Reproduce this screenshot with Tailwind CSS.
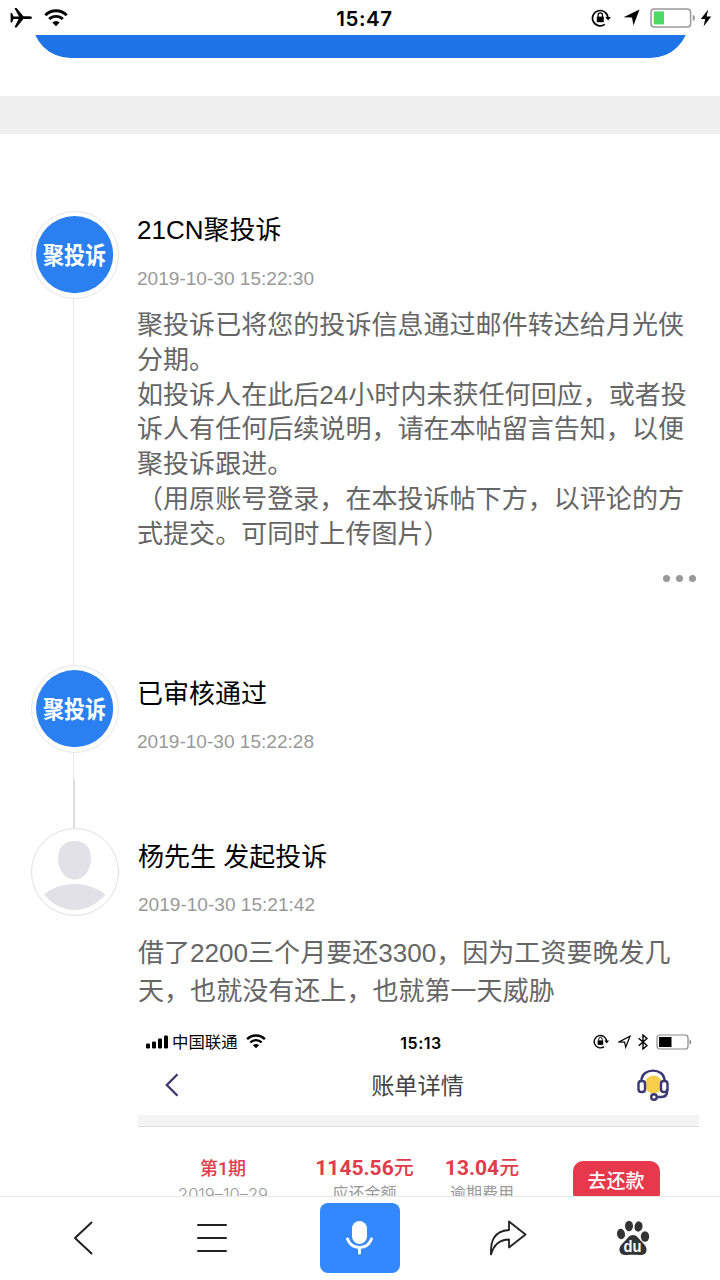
<!DOCTYPE html>
<html lang="zh-CN">

<head>
    <meta charset="UTF-8">
    <meta name="viewport" content="width=device-width, initial-scale=1.0">
    <title>聚投诉</title>
    <script src="https://cdn.jsdelivr.net/npm/@tailwindcss/browser@4"></script>
</head>
<body class="bg-white font-['Liberation_Sans','Noto_Sans_CJK_SC',sans-serif]">
    <div class="w-[720px] h-[1280px] flex flex-col overflow-hidden bg-white">

        <!-- status bar -->
        <header class="relative h-[35px] shrink-0 flex items-center justify-between pl-[10px] pr-[8px]">
            <div class="flex items-center gap-[11px]">
                <svg class="w-[23px] h-[20px]" viewBox="0 0 23 20">
                    <path d="M9 8.4 4.6.6Q4.3 0 5.2 0H6.6L13.4 8.3H20Q22 8.5 22 9.7T20 11H13.4L6.6 19.4H5.2Q4.4 19.3 4.7 18.7L8.6 11.1 3.6 10.9 2 14.6H.6V5H2L3.6 8.6Z" />
                </svg>
                <svg class="w-[24px] h-[18px]" viewBox="0 0 24 18" fill="none" stroke="#000">
                    <path d="M1.3 6.2A15 15 0 0 1 22.7 6.2" stroke-width="3" />
                    <path d="M5.2 10.1A9.6 9.6 0 0 1 18.8 10.1" stroke-width="2.8" />
                    <path d="M12 17.2 8.3 13.5A5.2 5.2 0 0 1 15.7 13.5Z" fill="#000" stroke="none" />
                </svg>
            </div>
            <span class="absolute left-0 w-[729px] text-center top-[5px] leading-7 text-[20.5px] tracking-[0.6px] font-semibold font-['Inter',sans-serif]">15:47</span>
            <div class="flex items-center">
                <svg class="w-[20px] h-[18px] mr-[12px]" viewBox="0 0 20 18" fill="none" stroke="#000" stroke-width="1.7">
                    <path d="M16.9 9A7.7 7.7 0 1 0 13.8 15.4" />
                    <path d="M14.3 7.9H20L17.1 11.6Z" fill="#000" stroke="none" />
                    <rect x="5.8" y="7.6" width="7" height="5.6" fill="#000" stroke="none" />
                    <path d="M7.1 8V6.1A2.2 2.2 0 0 1 11.5 6.1V8" stroke-width="1.2" />
                </svg>
                <svg class="w-[17px] h-[17px] mr-[10px]" viewBox="0 0 17 17"><path d="M16.5.5 10.5 16.5 9 8.6.5 8.3Z" /></svg>
                <svg class="w-[46px] h-[20px] mr-[4px]" viewBox="0 0 46 20">
                    <rect x="1" y="1" width="39.6" height="18" rx="3.2" fill="#fff" stroke="#999" stroke-width="1.5" />
                    <rect x="3.8" y="3.4" width="10.2" height="13" fill="#4cd964" />
                    <path d="M42.8 6.8Q45 7.4 45 10T42.8 13.2Z" fill="#999" />
                </svg>
                <svg class="w-[12px] h-[18px]" viewBox="0 0 12 18"><path d="M8.2.4.8 10H5.2L3.6 17.6 11.2 7.4H6.6Z" /></svg>
            </div>
        </header>

        <main class="flex-1 min-h-0 overflow-hidden">
            <div class="h-[61px] overflow-hidden flex flex-col items-center">
                <div class="w-[657px] h-[77px] -mt-[54.5px] shrink-0 rounded-[38.5px] bg-[#1e73e6]"></div>
            </div>
            <div class="h-[38px] bg-[#f0f0f0]"></div>

            <div class="pt-[77px] pl-[31px]">
                <div class="flex h-[454px]">
                    <div class="w-[88px] flex flex-col shrink-0">
                        <svg class="w-[88px] h-[88px] shrink-0" viewBox="0 0 88 88">
                            <circle cx="44" cy="44" r="43.5" fill="#fff" stroke="#e6e6e6" />
                            <circle cx="43.6" cy="43.6" r="38.6" fill="#2a80f0" />
                            <text x="12" y="52.5" textLength="63" lengthAdjust="spacingAndGlyphs" font-size="24" font-weight="700" fill="#fff" font-family="Noto Sans CJK SC">聚投诉</text>
                        </svg>
                        <div class="w-px flex-1 bg-[#e6e6e6] ml-[42px]"></div>
                    </div>
                    <div class="pl-[18px] w-[580px] whitespace-nowrap">
                        <h3 class="text-[26px] leading-[38px]">21CN聚投诉</h3>
                        <p class="mt-[18px] text-[19.07px] leading-6 text-[#999]">2019-10-30 15:22:30</p>
                        <p class="mt-[17px] text-[26.05px] leading-[34.8px] text-[#666]">聚投诉已将您的投诉信息通过邮件转达给月光侠<br>分期。<br>如投诉人在此后24小时内未获任何回应，或者投<br>诉人有任何后续说明，请在本帖留言告知，以便<br>聚投诉跟进。<br>（用原账号登录，在本投诉帖下方，以评论的方<br>式提交。可同时上传图片）</p>
                        <div class="mt-[23px] pr-[3px] flex justify-end gap-[6px]">
                            <i class="size-[7px] rounded-full bg-[#999]"></i>
                            <i class="size-[7px] rounded-full bg-[#999]"></i>
                            <i class="size-[7px] rounded-full bg-[#999]"></i>
                        </div>
                    </div>
                </div>

                <div class="flex h-[163px]">
                    <div class="w-[88px] flex flex-col shrink-0">
                        <svg class="w-[88px] h-[88px] shrink-0" viewBox="0 0 88 88">
                            <circle cx="44" cy="44" r="43.5" fill="#fff" stroke="#e6e6e6" />
                            <circle cx="43.6" cy="43.6" r="38.6" fill="#2a80f0" />
                            <text x="12" y="52.5" textLength="63" lengthAdjust="spacingAndGlyphs" font-size="24" font-weight="700" fill="#fff" font-family="Noto Sans CJK SC">聚投诉</text>
                        </svg>
                        <div class="w-px h-[27px] bg-[#e6e6e6] ml-[42px]"></div>
                        <div class="w-[2px] flex-1 bg-[#ddd] ml-[42px]"></div>
                    </div>
                    <div class="pl-[18px] whitespace-nowrap">
                        <h3 class="mt-[10px] text-[26px] leading-[38px]">已审核通过</h3>
                        <p class="mt-[17px] text-[19.07px] leading-6 text-[#999]">2019-10-30 15:22:28</p>
                    </div>
                </div>

                <div class="flex">
                    <svg class="w-[88px] h-[88px] shrink-0" viewBox="0 0 88 88">
                        <circle cx="44" cy="44" r="43.5" fill="#fff" stroke="#e0e0e0" />
                        <path d="M43.5 13C54 13 60 20 60 30C60 42 53 51.5 43.5 51.5S27 42 27 30C27 20 33 13 43.5 13Z" fill="#e1e1e7" />
                        <path d="M13 66.5Q25 56 43.5 56T74.500 66.5Q61 82 43.5 82T13 66.5Z" fill="#e1e1e7" />
                    </svg>
                    <div class="pl-[19px] w-[580px] whitespace-nowrap">
                        <h3 class="mt-[10px] text-[26px] leading-[38px]">杨先生 发起投诉</h3>
                        <p class="mt-[17px] text-[19.07px] leading-6 text-[#999]">2019-10-30 15:21:42</p>
                        <p class="mt-[17px] text-[26.05px] leading-[38.4px] text-[#666]">借了2200三个月要还3300，因为工资要晚发几<br>天，也就没有还上，也就第一天威胁</p>

                        <!-- attached bill image -->
                        <div class="w-[561px] mt-[18px]">
                            <div class="relative flex h-[26px] items-center justify-between pl-[8px] pr-[7px]">
                                <div class="flex items-center">
                                    <svg class="w-[23px] h-[14px]" viewBox="0 0 23 14">
                                        <rect x="0" y="8.5" width="4" height="5" rx="1.2" />
                                        <rect x="6" y="6.5" width="4" height="7" rx="1.2" />
                                        <rect x="12" y="3.5" width="4" height="10" rx="1.2" />
                                        <rect x="18" y=".5" width="4" height="13" rx="1.2" />
                                    </svg>
                                    <span class="ml-[3px] text-[16.4px] leading-6">中国联通</span>
                                    <svg class="ml-[8px] w-[20px] h-[15px]" viewBox="0 0 24 18" fill="none" stroke="#000">
                                        <path d="M1.3 6.2A15 15 0 0 1 22.7 6.2" stroke-width="3" />
                                        <path d="M5.2 10.1A9.6 9.6 0 0 1 18.8 10.1" stroke-width="2.8" />
                                        <path d="M12 17.2 8.3 13.5A5.2 5.2 0 0 1 15.7 13.5Z" fill="#000" stroke="none" />
                                    </svg>
                                </div>
                                <span class="absolute left-0 top-[2px] w-[566px] text-center text-[16px] leading-6 tracking-[0.5px] font-semibold font-['Inter',sans-serif]">15:13</span>
                                <div class="flex items-center">
                                    <svg class="w-[16px] h-[15px] mr-[9px]" viewBox="0 0 20 18" fill="none" stroke="#000" stroke-width="1.7">
                                        <path d="M16.9 9A7.7 7.7 0 1 0 13.8 15.4" />
                                        <path d="M14.3 7.9H20L17.1 11.6Z" fill="#000" stroke="none" />
                                        <rect x="5.8" y="7.6" width="7" height="5.6" fill="#000" stroke="none" />
                                        <path d="M7.1 8V6.1A2.2 2.2 0 0 1 11.5 6.1V8" stroke-width="1.2" />
                                    </svg>
                                    <svg class="w-[13px] h-[14px] mr-[7px]" viewBox="0 0 13 14" fill="none" stroke="#000" stroke-width="1.2"><path d="M12 1.2 7.7 12.2 6.6 7.1 1 6.9Z" /></svg>
                                    <svg class="w-[10px] h-[16px] mr-[8px]" viewBox="0 0 10 16" fill="none" stroke="#000" stroke-width="1.4"><path d="M.7 4.3 9 11.5 5 15V1L9 4.5.7 11.7" /></svg>
                                    <svg class="w-[36px] h-[16px]" viewBox="0 0 36 16">
                                        <rect x="1" y="1" width="31" height="14" rx="2.8" fill="#fff" stroke="#888" stroke-width="1.2" />
                                        <rect x="3" y="3" width="12.5" height="10" />
                                        <path d="M33.5 5.5Q35.3 6 35.3 8T33.5 10.5Z" fill="#888" />
                                    </svg>
                                </div>
                            </div>
                            <div class="flex items-center justify-between h-[60px] pl-[27px] pr-[30px]">
                                <svg class="w-[14px] h-[24px]" viewBox="0 0 14 24" fill="none" stroke="#3b3873" stroke-width="2.3"><path d="M12.5 1.3 1.8 12 12.5 22.7" /></svg>
                                <span class="pl-[19px] pt-[2px] text-[23.2px] leading-[34px] text-[#444]">账单详情</span>
                                <svg class="w-[32px] h-[32px]" viewBox="0 0 32 32" fill="none" stroke="#3b3873" stroke-width="2.4">
                                    <circle cx="16.5" cy="15.5" r="9" fill="#f8cf4a" stroke="none" />
                                    <path d="M4.5 12V10.5C5 5 10 1.6 16 1.6S27 5 27.5 10.5V12" />
                                    <rect x="1.500" y="12" width="6.500" height="11" rx="2.8" fill="#fff" />
                                    <rect x="24" y="12" width="6.500" height="11" rx="2.8" fill="#fff" />
                                    <path d="M30 20V23.5Q29.5 28 24 28H20.5" />
                                    <circle cx="17" cy="28" r="2.800" fill="#fff" />
                                </svg>
                            </div>
                            <div class="h-[12px] bg-[#f4f4f4] border-b border-[#ddd]"></div>
                            <div class="grid grid-cols-[170px_113px_122px_146px] text-center pt-[26px]">
                                <div>
                                    <p class="text-[18px] leading-8 font-medium text-[#e23b4b]">第<span class="font-['Roboto',sans-serif]">1</span>期</p>
                                    <p class="-mt-[3px] text-[16.5px] leading-6 text-[#999] font-['Inter',sans-serif] font-light">2019–10–29</p>
                                </div>
                                <div>
                                    <p class="text-[21px] leading-8 -mt-px -mx-2 font-bold text-[#e23b4b] font-['Roboto','Noto_Sans_CJK_SC',sans-serif]">1145.56<span class="text-[20px] font-medium">元</span></p>
                                    <p class="-mt-[2px] text-[16px] leading-6 text-[#999]">应还金额</p>
                                </div>
                                <div>
                                    <p class="text-[21px] leading-8 -mt-px font-bold text-[#e23b4b] font-['Roboto','Noto_Sans_CJK_SC',sans-serif]">13.04<span class="text-[20px] font-medium">元</span></p>
                                    <p class="-mt-[2px] text-[16px] leading-6 text-[#999]">逾期费用</p>
                                </div>
                                <div class="flex justify-center">
                                    <span class="mt-[8px] w-[87px] h-[42px] rounded-[10px] bg-[#e8384b] text-white text-[19px] leading-[42px] font-medium">去还款</span>
                                </div>
                            </div>
                        </div>
                    </div>
                </div>
            </div>
        </main>

        <!-- browser toolbar -->
        <footer class="relative z-10 h-[84px] shrink-0 bg-white border-t border-[#e8e8e8] flex items-center pb-px pl-[73px]">
            <svg class="w-[20px] h-[34px]" viewBox="0 0 20 34" fill="none" stroke="#222" stroke-width="2" stroke-linecap="round" stroke-linejoin="round"><path d="M18.5 1.5 2 17 18.5 32.500" /></svg>
            <svg class="ml-[103px] w-[32px] h-[30px]" viewBox="0 0 32 30" stroke="#222" stroke-width="2" stroke-linecap="round"><path d="M2 2H30M2 15H30M2 28H30" /></svg>
            <div class="ml-[92px] w-[80px] h-[70px] rounded-[8px] bg-[#3388ff] flex items-center justify-center">
                <svg class="w-[30px] h-[34px]" viewBox="0 0 30 34">
                    <rect x="7" y="0" width="15" height="23" rx="7.5" fill="#fff" />
                    <path d="M2.5 18Q6 26.5 14.5 26.5T26.5 18M14.5 27V32" fill="none" stroke="#fff" stroke-width="3" stroke-linecap="round" />
                </svg>
            </div>
            <svg class="ml-[89px] w-[38px] h-[36px]" viewBox="0 0 38 36" fill="none" stroke="#222" stroke-width="1.8" stroke-linejoin="round"><path d="M20 1.5 36.5 14.5 20 27.5V19.5C11 19.5 5 24 2 34.5C1.5 22 4 11 20 10Z" /></svg>
            <svg class="ml-[89px] w-[34px] h-[36px]" viewBox="0 0 34 36" fill="#333">
                <ellipse cx="5" cy="14" rx="4" ry="5.2" transform="rotate(-8 5 14)" />
                <ellipse cx="13" cy="6" rx="4" ry="5.2" />
                <ellipse cx="22.500" cy="6.5" rx="4" ry="5.2" transform="rotate(10 22.5 6.5)" />
                <ellipse cx="29" cy="16.5" rx="4.2" ry="5.2" />
                <path d="M17 15C21 15 22.5 18.500 25 21C28 24 31 26.5 30.5 30.5C30 34.5 27 35.3 23 35C19 34.6 15 34.6 11 35C7 35.4 4 34 3.500 30.5C3 26.5 6 24 9 21C11.5 18.5 13 15 17 15Z" />
                <text x="7.5" y="32" font-size="16" font-weight="700" fill="#fff" font-family="Liberation Sans" textLength="18" lengthAdjust="spacingAndGlyphs">du</text>
            </svg>
        </footer>
    </div>
</body>

</html>
